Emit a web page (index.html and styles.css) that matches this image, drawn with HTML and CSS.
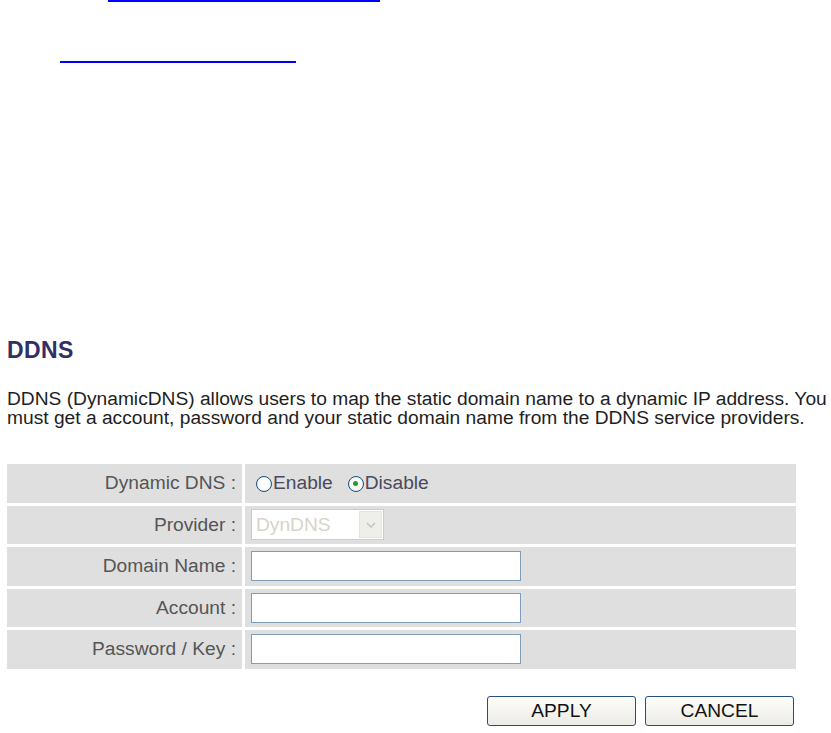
FILE: index.html
```html
<!DOCTYPE html>
<html lang="en">
<head>
  <meta charset="UTF-8">
  <title>DDNS</title>
  <link rel="stylesheet" href="styles.css">
</head>
<body>
  <div class="page">
    <span class="link-line first"></span>
    <span class="link-line second"></span>

    <h2 class="title">DDNS</h2>
    <p class="intro">DDNS (DynamicDNS) allows users to map the static domain name to a dynamic IP address. You must get a account, password and your static domain name from the DDNS service providers.</p>

    <div class="settings">
      <div class="label">Dynamic DNS :</div>
      <div class="value">
        <label class="choice"><input type="radio" name="ddns" value="on"><span>Enable</span></label>
        <label class="choice"><input type="radio" name="ddns" value="off" checked><span>Disable</span></label>
      </div>

      <div class="label">Provider :</div>
      <div class="value">
        <span class="select-box">
          <select id="provider" disabled>
            <option>DynDNS</option>
            <option>TZO</option>
          </select>
          <span class="select-arrow">
            <svg width="10" height="6" viewBox="0 0 10 6"><path d="M1 1 L5 5 L9 1" fill="none" stroke="#c4c4c4" stroke-width="1.6"/></svg>
          </span>
        </span>
      </div>

      <div class="label">Domain Name :</div>
      <div class="value"><input class="text" id="domain" type="text"></div>

      <div class="label">Account :</div>
      <div class="value"><input class="text" id="account" type="text"></div>

      <div class="label">Password / Key :</div>
      <div class="value"><input class="text" id="password" type="password"></div>
    </div>

    <div class="actions">
      <button class="btn" type="button">APPLY</button>
      <button class="btn" type="button">CANCEL</button>
    </div>
  </div>
</body>
</html>
```

FILE: styles.css
```css
body { margin: 0; font-family: "Liberation Sans", Arial, sans-serif; background: #fff; }
.page { width: 789px; padding-left: 7px; }

.link-line { display: block; height: 2px; background: #0000ff; }
.link-line.first { margin-left: 101px; width: 272px; }
.link-line.second { margin-left: 53px; width: 236px; margin-top: 59px; }

.title { margin: 274px 0 0; font-size: 23px; line-height: 26px; font-weight: bold; color: #303066; letter-spacing: 0.4px; }
.intro { margin: 27px 0 0; font-size: 19.2px; line-height: 18.5px; color: #1e1e1e; width: 824px; }

.settings { display: grid; grid-template-columns: 235px 551px; grid-auto-rows: 38.5px; gap: 3px; margin-top: 37px; }
.label { background: #dfdfdf; color: #555; font-size: 19.2px; padding-right: 6px; display: flex; align-items: center; justify-content: flex-end; }
.value { background: #dfdfdf; padding-left: 6px; display: flex; align-items: center; font-size: 19.2px; color: #4a4a5a; }

.choice { display: inline-flex; align-items: center; margin-right: 10px; }
.choice input { appearance: none; -webkit-appearance: none; flex: none; width: 16px; height: 16px; min-width: 16px; margin: 1px 1px 0 5px; border: 1.5px solid #1c5180; border-radius: 50%; background: radial-gradient(circle at 50% 50%, #fdfdfd 40%, #e2e2dc 100%); box-sizing: border-box; display: grid; place-items: center; }
.choice input:checked::after { content: ""; width: 5px; height: 5px; border-radius: 50%; background: #21a121; }
.choice span { line-height: 20px; }

.select-box { display: inline-flex; align-items: center; width: 133px; height: 31px; box-sizing: border-box; border: 1px solid #cfcdbf; background: #fff; }
.select-box select { appearance: none; -webkit-appearance: none; border: none; background: transparent; font-family: "Liberation Sans", Arial, sans-serif; font-size: 19.2px; color: #c9c2b3; padding: 0 0 0 4px; width: 107px; height: 29px; }
.select-arrow { width: 23px; height: 27px; margin-right: 1px; background: #efefe9; border: 1px solid #e4e4dc; box-sizing: border-box; display: flex; align-items: center; justify-content: center; }

.text { width: 270px; height: 30px; box-sizing: border-box; border: 1px solid #7f9db9; background: #fff; margin: 0; }

.actions { display: flex; justify-content: flex-end; gap: 9px; margin-top: 27.5px; padding-right: 2px; }
.btn { width: 149px; height: 30px; border: 1px solid #23507f; border-radius: 3px; background: linear-gradient(#fdfdfb, #ecebe5); font-family: "Liberation Sans", Arial, sans-serif; font-size: 19.2px; color: #111; padding: 0; }
```
